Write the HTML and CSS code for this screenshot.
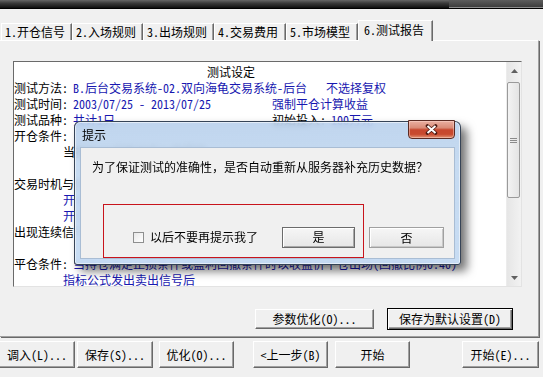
FILE: index.html
```html
<!DOCTYPE html>
<html lang="zh-CN">
<head>
<meta charset="utf-8">
<title>测试报告</title>
<link rel="stylesheet" href="styles.css">
</head>
<body>
<div class="titlebar"><div class="tb-right"></div></div>
<div class="tabs">
  <div class="tab">1.开仓信号</div>
  <div class="tab">2.入场规则</div>
  <div class="tab">3.出场规则</div>
  <div class="tab wide">4.交易费用</div>
  <div class="tab wide">5.市场模型</div>
  <div class="tab active">6.测试报告</div>
</div>
<div class="panel">
  <div class="report">
    <div class="report-text">
      <div class="line"><span class="title-txt">测试设定</span></div>
      <div class="line"><span class="col col-a"><span class="lbl">测试方法:</span><span class="val">B.后台交易系统-02.双向海龟交易系统-后台</span></span><span class="val">不选择复权</span></div>
      <div class="line"><span class="col col-b"><span class="lbl">测试时间:</span><span class="val">2003/07/25 - 2013/07/25</span></span><span class="val">强制平仓计算收益</span></div>
      <div class="line"><span class="col col-b"><span class="lbl">测试品种:</span><span class="val">共计1只</span></span><span class="lbl">初始投入:</span><span class="val">100万元</span></div>
      <div class="line">开仓条件:</div>
      <div class="line indent">当指标公式发出买入信号后</div>
      <div class="line"></div>
      <div class="line">交易时机与价格:</div>
      <div class="line indent val">开仓时机: 信号出现后的下一根K线</div>
      <div class="line indent val">开仓价格: 下一根K线的开盘价</div>
      <div class="line">出现连续信号时: 不重复开仓</div>
      <div class="line"></div>
      <div class="line"><span class="lbl">平仓条件:</span><span class="val">当持仓满足止损条件或盈利回撤条件时以收盘价平仓出场(回撤比例0.40)</span></div>
      <div class="line indent val">指标公式发出卖出信号后</div>
    </div>
    <div class="scrollbar">
      <div class="sb-arrow"><svg width="7" height="4" viewBox="0 0 7 4"><path d="M0 4 L3.5 0 L7 4 Z" fill="#606060"/></svg></div>
      <div class="sb-thumb"><svg width="7" height="5" viewBox="0 0 7 5"><path d="M0 0.5 H7 M0 2.5 H7 M0 4.5 H7" stroke="#8a8a8a" stroke-width="1"/></svg></div>
      <div class="sb-track"></div>
      <div class="sb-arrow"><svg width="7" height="4" viewBox="0 0 7 4"><path d="M0 0 L3.5 4 L7 0 Z" fill="#606060"/></svg></div>
    </div>
  </div>
  <div class="panel-buttons">
    <button class="btn btn-opt">参数优化(O)...</button>
    <button class="btn btn-default">保存为默认设置(D)</button>
  </div>
</div>
<div class="bottom-bar">
  <button class="btn b1">调入(L)...</button>
  <button class="btn b2">保存(S)...</button>
  <button class="btn b3">优化(O)...</button>
  <button class="btn b4">&lt;上一步(B)</button>
  <button class="btn b5">开始</button>
  <button class="btn b6">开始(E)...</button>
</div>

<div class="dialog">
  <div class="dlg-title">提示</div>
  <div class="dlg-close"><svg width="13" height="11" viewBox="0 0 13 11"><path d="M2.5 2 L10.5 9 M10.5 2 L2.5 9" stroke="#4a1810" stroke-width="3.6" stroke-linecap="round"/><path d="M2.5 2 L10.5 9 M10.5 2 L2.5 9" stroke="#fff" stroke-width="2"/></svg></div>
  <div class="dlg-client">
    <div class="dlg-msg">为了保证测试的准确性，是否自动重新从服务器补充历史数据？</div>
    <div class="dlg-row">
      <div class="dlg-mark">
        <span class="chk"></span>
        <span class="chk-label">以后不要再提示我了</span>
        <button class="dbtn dbtn-yes">是</button>
      </div>
      <button class="dbtn dbtn-no">否</button>
    </div>
  </div>
</div>
</body>
</html>
```

FILE: styles.css
```css
* { box-sizing: border-box; }
html, body { margin: 0; padding: 0; }
body {
  width: 543px;
  height: 377px;
  overflow: hidden;
  position: relative;
  background: #f0f0f0;
  font-family: "Noto Sans CJK SC", "Noto Sans", sans-serif;
  font-size: 12px;
  line-height: 16px;
  font-feature-settings: "hwid" 1;
  color: #000;
}

.titlebar {
  height: 9px;
  display: flex;
  background: linear-gradient(#666 0%, #3a3a3a 40%, #1e1e1e 80%, #0d0d0d 100%);
  border-bottom: 1px solid #000;
}
.tb-right {
  margin-left: auto;
  width: 94px;
  background: linear-gradient(#5c5c5c, #3c3c3c);
  border-bottom: 1px solid #8c8c8c;
}

/* tabs */
.tabs {
  display: flex;
  align-items: flex-end;
  height: 20px;
  margin-top: 11px;
  padding-left: 1px;
  position: relative;
  z-index: 1;
}
.tab {
  width: 71px;
  height: 17px;
  padding-left: 3px;
  border-left: 1px solid #fff;
  border-top: 1px solid #fff;
  border-right: 1px solid #696969;
  box-shadow: inset -1px 0 #a0a0a0;
  white-space: nowrap;
  line-height: 16px;
}
.tab.wide { width: 72px; }
.tab.active {
  width: 75px;
  height: 21px;
  margin-bottom: -1px;
  padding: 1px 0 0 5px;
  background: #f0f0f0;
}

/* panel */
.panel {
  width: 539px;
  height: 297px;
  border-top: 1px solid #fff;
  border-right: 1px solid #a0a0a0;
  border-bottom: 1px solid #a0a0a0;
  box-shadow: 1px 1px 0 #696969;
  padding: 20px 0 0 13px;
}
.report {
  display: flex;
  width: 509px;
  height: 226px;
  border-top: 1px solid #6a6a6a;
  border-left: 1px solid #6a6a6a;
  border-right: 1px solid #e3e3e3;
  border-bottom: 1px solid #e3e3e3;
}
.report-text {
  flex: 1;
  background: #fff;
  padding: 2px 0 0 0;
  overflow: hidden;
  white-space: nowrap;
}
.line { height: 16px; }
.title-txt { margin-left: 193px; }
.col { display: inline-block; }
.col-a { width: 312px; }
.col-b { width: 258px; }
.lbl { display: inline-block; width: 59px; color: #000; }
.val { color: #1818b0; }
.indent { padding-left: 49px; }

.scrollbar {
  width: 15px;
  display: flex;
  flex-direction: column;
  background: linear-gradient(to right, #e6e6e6, #f2f2f2);
  border-left: 1px solid #ececec;
}
.sb-arrow {
  height: 17px;
  display: flex;
  align-items: center;
  justify-content: center;
}
.sb-thumb {
  margin: 3px 1px 0 0;
  height: 116px;
  border: 1px solid #9a9a9a;
  border-radius: 2px;
  background: linear-gradient(to right, #f3f3f3, #e4e4e4);
  display: flex;
  align-items: center;
  justify-content: center;
}
.sb-track { flex: 1; }

.panel-buttons {
  display: flex;
  align-items: center;
  justify-content: flex-end;
  height: 22px;
  margin-top: 21px;
  padding-right: 25px;
  gap: 13px;
}

.btn {
  font: inherit;
  font-feature-settings: "hwid" 1;
  color: #000;
  background: #f0f0f0;
  border: 1px solid;
  border-color: #fff #696969 #696969 #fff;
  box-shadow: inset -1px -1px #a0a0a0;
  padding: 0;
  margin: 0;
  white-space: nowrap;
  line-height: 16px;
}
.btn-opt { width: 119px; height: 20px; }
.btn-default {
  width: 126px;
  height: 22px;
  border: 1px solid #000;
  box-shadow: inset 1px 1px #fff, inset -1px -1px #696969, inset -2px -2px #a0a0a0;
}

.bottom-bar {
  display: flex;
  height: 27px;
  margin-top: 4px;
}
.bottom-bar .btn { height: 27px; }
.b1 { width: 76px; margin-left: -1px; }
.b2 { width: 76px; margin-left: 2px; }
.b3 { width: 75px; margin-left: 6px; }
.b4 { width: 75px; margin-left: 19px; }
.b5 { width: 75px; margin-left: 7px; }
.b6 { width: 77px; margin-left: 52px; }

/* modal dialog (overlay) */
.dialog {
  position: absolute;
  left: 74px;
  top: 121px;
  width: 387px;
  height: 144px;
  border: 1px solid rgba(40, 52, 70, 0.9);
  border-radius: 6px 6px 3px 3px;
  background: linear-gradient(to bottom, rgba(178, 204, 234, 0.82), rgba(192, 215, 240, 0.9) 30%, rgba(196, 218, 242, 0.95));
  -webkit-backdrop-filter: blur(3px);
  backdrop-filter: blur(3px);
  box-shadow: inset 0 0 0 1px rgba(255, 255, 255, 0.55), 6px 6px 10px rgba(0, 0, 0, 0.55);
  z-index: 5;
}
.dlg-title {
  height: 25px;
  line-height: 25px;
  padding-left: 7px;
  color: #000;
}
.dlg-close {
  position: absolute;
  top: -2px;
  left: 333px;
  width: 47px;
  height: 19px;
  border: 1px solid #5a2a22;
  border-radius: 0 0 4px 4px;
  background: linear-gradient(#eab0a2 0%, #d98b77 40%, #c7472e 52%, #c84a2e 78%, #e39475 100%);
  box-shadow: inset 0 0 0 1px rgba(255, 220, 210, 0.45);
  display: flex;
  align-items: center;
  justify-content: center;
}
.dlg-client {
  margin: 0 5px;
  height: 112px;
  background: #f0f0f0;
  border: 1px solid #a9bdd4;
}
.dlg-msg {
  margin-top: 11px;
  padding-left: 11px;
  white-space: nowrap;
  font-feature-settings: normal;
}
.dlg-row {
  display: flex;
  align-items: flex-start;
  margin-top: 29px;
  padding-left: 22px;
}
.dlg-mark {
  width: 261px;
  height: 54px;
  border: 1px solid #c8141c;
  padding-top: 12px;
  display: flex;
  align-items: center;
}
.chk {
  width: 11px;
  height: 11px;
  margin-left: 29px;
  border: 1px solid #8e8f8f;
  background: linear-gradient(135deg, #e8e8e8, #fff);
}
.chk-label {
  margin-left: 6px;
  white-space: nowrap;
}
.dbtn {
  font: inherit;
  color: #000;
  height: 21px;
  padding: 0;
  margin: 0;
  background: linear-gradient(#f6f6f6, #e6e6e6);
  line-height: 16px;
}
.dbtn-yes {
  width: 73px;
  margin-left: 24px;
  border: 1px solid #6b6b6b;
  box-shadow: inset 1px 1px #fff, inset -1px -1px #a8a8a8;
}
.dbtn-no {
  width: 75px;
  margin-left: 5px;
  margin-top: 23px;
  border: 1px solid #a0a0a0;
  box-shadow: inset 1px 1px #fff, inset -1px -1px #c8c8c8;
}
```
